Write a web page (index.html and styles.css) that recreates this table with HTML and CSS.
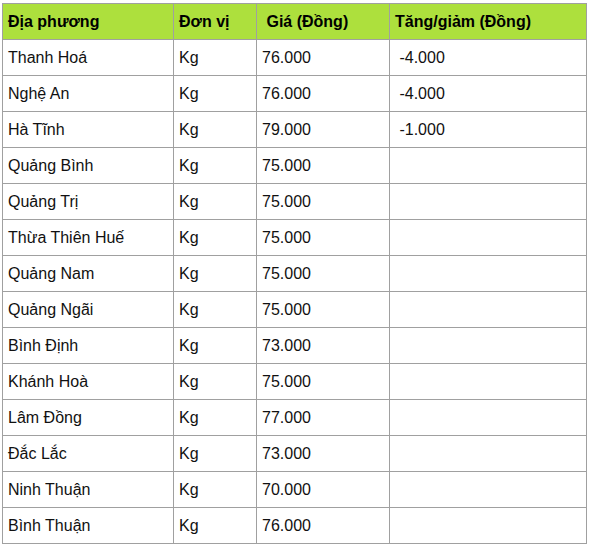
FILE: index.html
```html
<!DOCTYPE html>
<html lang="vi">
<head>
<meta charset="utf-8">
<title>Giá heo hơi</title>
<link rel="stylesheet" href="styles.css">
</head>
<body>
<div class="wrap">
<table class="price-table">
<colgroup>
<col class="c1"><col class="c2"><col class="c3"><col class="c4">
</colgroup>
<thead>
<tr><th>Địa phương</th><th>Đơn vị</th><th>&nbsp;Giá (Đồng)</th><th>Tăng/giảm (Đồng)</th></tr>
</thead>
<tbody>
<tr><td>Thanh Hoá</td><td>Kg</td><td>76.000</td><td>&nbsp;-4.000</td></tr>
<tr><td>Nghệ An</td><td>Kg</td><td>76.000</td><td>&nbsp;-4.000</td></tr>
<tr><td>Hà Tĩnh</td><td>Kg</td><td>79.000</td><td>&nbsp;-1.000</td></tr>
<tr><td>Quảng Bình</td><td>Kg</td><td>75.000</td><td></td></tr>
<tr><td>Quảng Trị</td><td>Kg</td><td>75.000</td><td></td></tr>
<tr><td>Thừa Thiên Huế</td><td>Kg</td><td>75.000</td><td></td></tr>
<tr><td>Quảng Nam</td><td>Kg</td><td>75.000</td><td></td></tr>
<tr><td>Quảng Ngãi</td><td>Kg</td><td>75.000</td><td></td></tr>
<tr><td>Bình Định</td><td>Kg</td><td>73.000</td><td></td></tr>
<tr><td>Khánh Hoà</td><td>Kg</td><td>75.000</td><td></td></tr>
<tr><td>Lâm Đồng</td><td>Kg</td><td>77.000</td><td></td></tr>
<tr><td>Đắc Lắc</td><td>Kg</td><td>73.000</td><td></td></tr>
<tr><td>Ninh Thuận</td><td>Kg</td><td>70.000</td><td></td></tr>
<tr><td>Bình Thuận</td><td>Kg</td><td>76.000</td><td></td></tr>
</tbody>
</table>
</div>
</body>
</html>
```
FILE: styles.css
```css
html, body {
  margin: 0;
  padding: 0;
  background: #ffffff;
}
.wrap {
  padding: 3px 0 0 2px;
}
.price-table {
  border-collapse: collapse;
  table-layout: fixed;
  width: 585px;
  font-family: "Liberation Sans", Arial, sans-serif;
  font-size: 16px;
  color: #111111;
}
.c1 { width: 171px; }
.c2 { width: 83px; }
.c3 { width: 133px; }
.c4 { width: 197px; }
.price-table th,
.price-table td {
  border: 1px solid #a0a0a0;
  height: 36px;
  padding: 0 5px;
  text-align: left;
  vertical-align: middle;
  white-space: nowrap;
  box-sizing: border-box;
}
.price-table th {
  background: #ade03d;
  font-weight: bold;
  color: #000000;
}
```
